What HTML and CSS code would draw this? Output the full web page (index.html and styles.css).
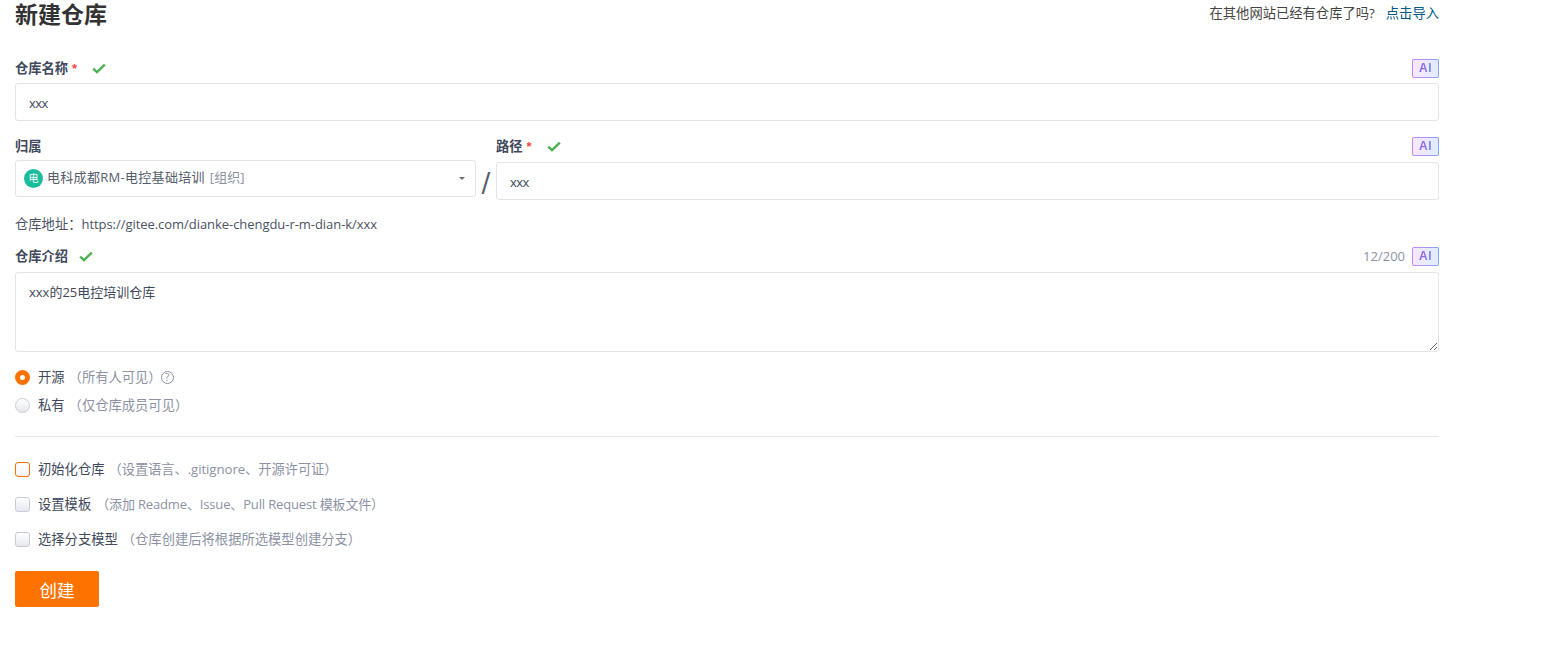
FILE: index.html
```html
<!DOCTYPE html>
<html lang="zh-CN">
<head>
    <meta charset="UTF-8">
    <title>新建仓库</title>
    <link rel="stylesheet" href="styles.css">
</head>
<body>
    <div class="page">
        <div class="page-head">
            <h1 class="page-title">新建仓库</h1>
            <div class="import-tip">在其他网站已经有仓库了吗?<a class="import-link" href="#">点击导入</a></div>
        </div>

        <div class="field">
            <div class="field-label">
                <span class="label-text">仓库名称</span><span class="required">*</span>
                <svg class="check check-name" viewBox="0 0 14 11"><path d="M1.2 5.6 5 9.2 12.8 1.6"/></svg>
                <span class="ai-badge"><span class="ai-text">AI</span></span>
            </div>
            <input class="text-input" type="text" value="xxx">
        </div>

        <div class="owner-row">
            <div class="owner-col">
                <div class="field-label owner-label"><span class="label-text">归属</span></div>
                <div class="select-box">
                    <span class="avatar">电</span>
                    <span class="select-name">电科成都RM-电控基础培训</span>
                    <span class="select-type">[组织]</span>
                    <span class="caret"></span>
                </div>
            </div>
            <div class="slash">/</div>
            <div class="path-col">
                <div class="field-label label-wide">
                    <span class="label-text">路径</span><span class="required">*</span>
                    <svg class="check check-name" viewBox="0 0 14 11"><path d="M1.2 5.6 5 9.2 12.8 1.6"/></svg>
                    <span class="ai-badge"><span class="ai-text">AI</span></span>
                </div>
                <input class="text-input" type="text" value="xxx">
            </div>
        </div>

        <div class="repo-url"><span class="url-label">仓库地址：</span>https://gitee.com/dianke-chengdu-r-m-dian-k/xxx</div>

        <div class="field field-desc">
            <div class="field-label label-wide">
                <span class="label-text">仓库介绍</span>
                <svg class="check check-desc" viewBox="0 0 14 11"><path d="M1.2 5.6 5 9.2 12.8 1.6"/></svg>
                <span class="counter">12/200</span>
                <span class="ai-badge ai-badge-near"><span class="ai-text">AI</span></span>
            </div>
            <textarea class="text-area">xxx的25电控培训仓库</textarea>
        </div>

        <div class="radio-group">
            <div class="choice">
                <span class="radio radio-on"></span>
                <span class="choice-name">开源</span>
                <span class="choice-note">（所有人可见）</span>
                <span class="help">?</span>
            </div>
            <div class="choice">
                <span class="radio"></span>
                <span class="choice-name">私有</span>
                <span class="choice-note">（仅仓库成员可见）</span>
            </div>
        </div>

        <div class="divider"></div>

        <div class="check-group">
            <div class="choice">
                <span class="checkbox checkbox-focus"></span>
                <span class="choice-name">初始化仓库</span>
                <span class="choice-note note-tight">（设置语言、.gitignore、开源许可证）</span>
            </div>
            <div class="choice">
                <span class="checkbox"></span>
                <span class="choice-name">设置模板</span>
                <span class="choice-note note-latin">（添加 Readme、Issue、Pull Request 模板文件）</span>
            </div>
            <div class="choice">
                <span class="checkbox"></span>
                <span class="choice-name">选择分支模型</span>
                <span class="choice-note">（仓库创建后将根据所选模型创建分支）</span>
            </div>
        </div>

        <button class="submit-button">创建</button>
    </div>
</body>
</html>
```

FILE: styles.css
```css
body {
    margin: 0;
    background-color: #ffffff;
    font-family: "Open Sans", "Noto Sans CJK SC", sans-serif;
    font-size: 13px;
    color: #40485b;
}

.page {
    width: 1424px;
    margin-left: 15px;
    display: flex;
    flex-direction: column;
}

.page-head {
    display: flex;
    justify-content: space-between;
    height: 59px;
}

.page-title {
    margin: 0;
    font-size: 23px;
    line-height: 28px;
    font-weight: 700;
    color: #333333;
}

.import-tip {
    font-size: 13.3px;
    line-height: 26px;
    color: #444444;
}

.import-link {
    margin-left: 11px;
    color: #005980;
    text-decoration: none;
}

.field-label {
    display: flex;
    align-items: center;
    height: 19px;
    margin-bottom: 5px;
}

.label-wide {
    margin-bottom: 6px;
}

.label-text {
    padding-bottom: 2px;
    font-size: 13.25px;
    font-weight: 700;
}

.required {
    margin-left: 4px;
    padding-bottom: 1px;
    font-family: "Liberation Sans", sans-serif;
    font-size: 13px;
    font-weight: 700;
    color: #f5483b;
}

.check {
    width: 14px;
    height: 11px;
    fill: none;
    stroke: #4caf50;
    stroke-width: 2.4;
}

.check-name {
    margin-left: 15px;
}

.check-desc {
    margin-left: 11px;
}

.ai-badge {
    margin-left: auto;
    width: 27px;
    height: 19px;
    box-sizing: border-box;
    border: 1px solid transparent;
    border-radius: 2px;
    background: linear-gradient(90deg, #f5e8fd, #e3ebff) padding-box,
        linear-gradient(90deg, #cf86f5, #7fa6fb) border-box;
    font-family: "Liberation Sans", sans-serif;
    font-size: 12px;
    font-weight: 700;
    line-height: 17px;
    letter-spacing: 0.5px;
    text-align: center;
}

.ai-text {
    background: linear-gradient(90deg, #9a55ea, #6f8ef5);
    -webkit-background-clip: text;
    background-clip: text;
    color: transparent;
}

.ai-badge-near {
    margin-left: 7px;
}

.counter {
    margin-left: auto;
    padding-bottom: 1px;
    color: #8c92a4;
}

.text-input {
    display: block;
    width: 100%;
    height: 38px;
    box-sizing: border-box;
    padding: 2px 13px 0;
    border: 1px solid #e3e3ea;
    border-radius: 3px;
    outline: none;
    font: inherit;
    letter-spacing: -0.5px;
    color: #40485b;
}

.owner-row {
    display: flex;
    margin-top: 16px;
}

.owner-col {
    width: 461px;
}

.owner-label {
    margin-bottom: 4px;
}

.select-box {
    display: flex;
    align-items: center;
    height: 37px;
    box-sizing: border-box;
    padding: 0 9px 0 8px;
    border: 1px solid #e3e3ea;
    border-radius: 3px;
}

.avatar {
    width: 19px;
    height: 19px;
    margin-right: 4px;
    border-radius: 50%;
    background-color: #1abc9c;
    color: #ffffff;
    font-size: 10px;
    line-height: 19px;
    text-align: center;
}

.select-name {
    padding-bottom: 4px;
    letter-spacing: 0.3px;
    color: #555b6c;
}

.select-type {
    margin-left: 5px;
    padding-bottom: 4px;
    letter-spacing: 0.1px;
    color: #8c92a4;
}

.caret {
    margin-left: auto;
    margin-right: 1px;
    border-left: 3.5px solid transparent;
    border-right: 3.5px solid transparent;
    border-top: 3.5px solid #6b7080;
}

.slash {
    width: 20px;
    height: 37px;
    align-self: flex-end;
    font-family: "DejaVu Sans", sans-serif;
    font-size: 26px;
    line-height: 40px;
    text-align: center;
    color: #555b6c;
}

.path-col {
    flex: 1;
}

.repo-url {
    margin-top: 14px;
    line-height: 20px;
    letter-spacing: -0.05px;
    color: #4b5264;
}

.url-label {
    font-size: 13.3px;
    letter-spacing: 0;
}

.field-desc {
    margin-top: 13px;
}

.text-area {
    display: block;
    width: 100%;
    height: 80px;
    box-sizing: border-box;
    padding: 9px 13px;
    border: 1px solid #e3e3ea;
    border-radius: 3px;
    outline: none;
    font: inherit;
    color: #40485b;
}

.radio-group {
    display: flex;
    flex-direction: column;
    gap: 8px;
    margin-top: 15px;
}

.choice {
    display: flex;
    align-items: center;
    height: 20px;
    font-size: 13.3px;
}

.radio {
    width: 15px;
    height: 15px;
    box-sizing: border-box;
    margin-right: 8px;
    border: 1px solid #c9ccd6;
    border-radius: 50%;
    background: linear-gradient(180deg, #ffffff, #e6e8ee);
}

.radio-on {
    border: 5px solid #fe7300;
    background: #ffffff;
}

.choice-name {
    padding-bottom: 2px;
    color: #40485b;
}

.choice-note {
    margin-left: 4px;
    padding-bottom: 2px;
    color: #8c92a4;
}

.note-tight {
    letter-spacing: -0.1px;
}

.note-latin {
    margin-left: 5px;
    font-size: 13px;
    letter-spacing: -0.15px;
}

.help {
    width: 13px;
    height: 13px;
    box-sizing: border-box;
    margin-left: -1px;
    border: 1px solid #8c92a4;
    border-radius: 50%;
    color: #8c92a4;
    font-size: 10px;
    line-height: 11px;
    text-align: center;
}

.divider {
    height: 1px;
    margin-top: 21px;
    background-color: #e3e7ee;
}

.check-group {
    display: flex;
    flex-direction: column;
    gap: 15px;
    margin-top: 22px;
}

.checkbox {
    width: 15px;
    height: 15px;
    box-sizing: border-box;
    margin-right: 8px;
    border: 1px solid #c9ccd6;
    border-radius: 3px;
    background: linear-gradient(180deg, #ffffff, #e6e8ee);
}

.checkbox-focus {
    border-color: #fe7300;
    background: linear-gradient(180deg, #ffffff, #f3f3f5);
}

.submit-button {
    width: 84px;
    height: 36px;
    margin-top: 22px;
    border: none;
    border-radius: 2px;
    background-color: #fe7300;
    color: #ffffff;
    font: inherit;
    font-size: 17.5px;
}
```
